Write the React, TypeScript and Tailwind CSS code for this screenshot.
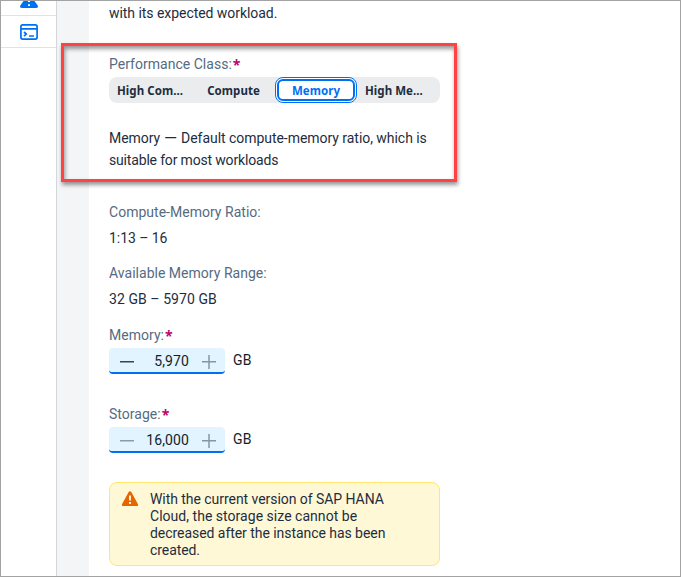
import type { ReactNode } from "react";

function Label({ children, required, className = "" }: { children: ReactNode; required?: boolean; className?: string }) {
  return (
    <div className={`flex h-5 items-center whitespace-nowrap leading-5 tracking-[0.02px] text-[#556b82] ${className}`}>
      <span>{children}</span>
      {required && (
        <span className="ml-px h-5 pt-px text-[14px] font-bold leading-5 tracking-normal text-[#ba066c] [font-family:'Noto_Sans',sans-serif]">*</span>
      )}
    </div>
  );
}

function StepInput({ value, canDecrease }: { value: string; canDecrease?: boolean }) {
  return (
    <div className="flex h-[26px] items-start">
      <div className="flex h-[26px] w-[116px] items-center rounded-[4px] border-b-2 border-[#0070f2] bg-[#e1f4ff]">
        <svg className="h-6 w-[36px] shrink-0" viewBox="0 0 36 24" fill="none">
          <path d="M11 13.75h14" stroke={canDecrease ? "#32465a" : "#8a9ca9"} strokeWidth="1.5" />
        </svg>
        <div className="w-[44px] pt-[2px] text-right leading-5 tracking-[0.1px] text-[#131e29]">{value}</div>
        <svg className="h-6 w-[36px] shrink-0" viewBox="0 0 36 24" fill="none" stroke="#8496a4" strokeWidth="1.5">
          <path d="M13 13.75h14M20 7v14" />
        </svg>
      </div>
      <span className="ml-2 mt-[2px] leading-5 tracking-[0.2px] text-[#131e29]">GB</span>
    </div>
  );
}

function Sidebar() {
  return (
    <nav className="flex w-[56px] shrink-0 flex-col border-r border-[#d4d6d9] bg-white">
      <div className="flex h-[15px] items-start justify-center border-b border-[#e2e2e2]">
        <svg className="h-[8px] w-[20px]" viewBox="0 0 20 8">
          <path d="M4.500 0h11l3 4.200c1 1.500.4 2.800-1.500 2.800H3C1.100 7 .5 5.700 1.500 4.200z" fill="#0070f2" />
          <path d="M10 0v1M10 3.300v1.700" stroke="#fff" strokeWidth="2" />
        </svg>
      </div>
      <div className="flex h-8 items-center justify-center border-b border-[#e2e2e2]">
        <svg className="h-[16px] w-[18px]" viewBox="0 0 18 16" fill="none" stroke="#0070f2" strokeWidth="1.700">
          <rect x=".9" y=".9" width="16.200" height="14.200" rx="1.800" />
          <path d="M1 4.800h16M4 8l2.300 2.100L4 12.200M9 12h5" />
        </svg>
      </div>
    </nav>
  );
}

export default function App() {
  return (
    <div className="relative flex h-[577px] w-[681px] overflow-hidden border border-[#a3a3a3] bg-white text-[14px] font-normal text-[#1d2d3e] [font-family:Roboto,'Liberation_Sans',sans-serif]">
      <Sidebar />
      <div className="w-8 shrink-0 bg-[#f4f5f7]" />
      <main className="w-[351px] pl-5 pt-px">
        <p className="h-[22px] whitespace-nowrap leading-[22px] tracking-[-0.05px]"><span>with its expected workload.</span></p>
        <Label required className="mt-[30px]">Performance Class:</Label>
        <div className="mt-[3px] flex h-[26px] w-[331px] items-center rounded-lg bg-[#eaecee] text-[11.5px] font-bold tracking-[0.05px] [font-family:'Noto_Sans',sans-serif]">
          <span className="w-[83px] pl-2 pt-px">High Com...</span>
          <span className="w-[83px] pt-px text-center">Compute</span>
          <span className="flex h-[26px] w-[82px] rounded-[8px] border border-[#0070f2] bg-white p-px">
            <span className="flex flex-1 items-center justify-center rounded-[6px] border-2 border-[#0070f2] pt-px text-[#0070f2]">Memory</span>
          </span>
          <span className="w-[83px] pl-2 pt-px">High Me...</span>
        </div>
        <p className="mt-[24px] whitespace-nowrap leading-[22px]">
          <span className="tracking-[-0.04px]">Memory <span className="inline-block w-[14px]"><span className="inline-block origin-left scale-x-[1.2]">—</span></span> Default compute-memory ratio, which is</span>
          <br />
          <span className="tracking-[-0.17px]">suitable for most workloads</span>
        </p>
        <Label className="mt-[31px]">Compute-Memory Ratio:</Label>
        <p className="mt-[6px] leading-5 tracking-[-0.05px]">1:13 – 16</p>
        <Label className="mt-[15px]">Available Memory Range:</Label>
        <p className="mt-[6px] leading-5 tracking-[0.07px]">32 GB – 5970 GB</p>
        <Label required className="mt-[16px]">Memory:</Label>
        <div className="mt-[3px]"><StepInput value="5,970" canDecrease /></div>
        <Label required className="mt-[30px]">Storage:</Label>
        <div className="mt-[3px]"><StepInput value="16,000" /></div>
        <div className="mt-[29px] flex h-[84px] w-[331px] rounded-lg border border-[#ffe770] bg-[#fff8d6] pl-3 pt-2">
          <svg className="-ml-px h-[16px] w-[18px] shrink-0" viewBox="0 0 17 16">
            <path d="M7.200.9c.6-1 2-1 2.600 0l6.600 12.200c.6 1.100 0 1.900-1.100 1.900H1.700C.6 15 0 14.200.6 13.100z" fill="#e76500" />
            <path d="M8.500 4.500v5M8.500 11v2" stroke="#fff8d6" strokeWidth="1.900" />
          </svg>
          <p className="ml-[11px] whitespace-nowrap leading-[17px]">
            <span className="tracking-[-0.05px]">With the current version of SAP HANA</span><br />
            <span className="tracking-[0.03px]">Cloud, the storage size cannot be</span><br />
            <span className="tracking-[-0.05px]">decreased after the instance has been</span><br />
            <span className="tracking-[-0.08px]">created.</span>
          </p>
        </div>
      </main>
      <div className="pointer-events-none absolute left-[60px] top-[42px] h-[139px] w-[396px] border-[3px] border-[#ff4343] shadow-[1px_3px_4px_rgba(0,0,0,.4),inset_1px_3px_4px_rgba(0,0,0,.4)]" />
    </div>
  );
}
